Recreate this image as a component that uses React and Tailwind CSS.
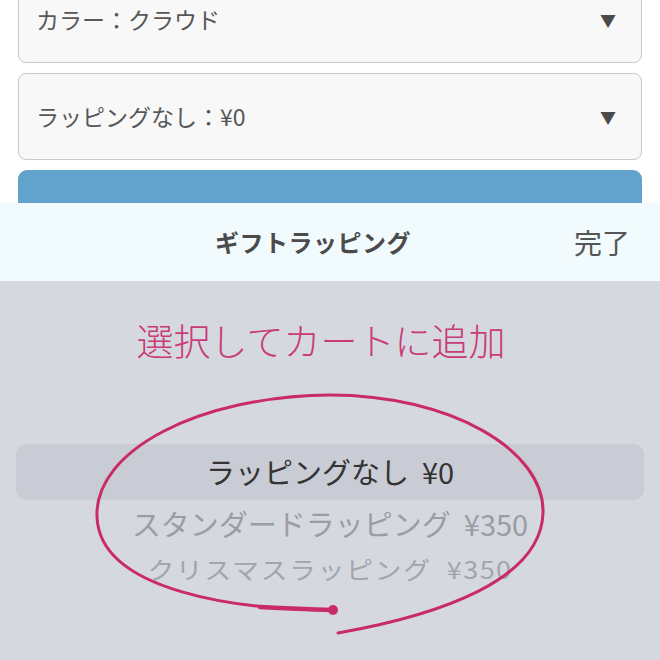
const font = { fontFamily: '"Noto Sans CJK JP", "Noto Sans", sans-serif' };

function SelectBox({ label, className = "" }) {
  return (
    <div
      className={`flex h-[87px] items-center justify-between rounded-[8px] border-[1.5px] border-[#c9c9c9] bg-[#f8f8f8] pl-[17px] pr-[25px] ${className}`}
    >
      <span className="text-[23px] text-[#575757]">{label}</span>
      <span className="text-[16px] leading-none text-[#4a4a4a]">▼</span>
    </div>
  );
}

function Circle() {
  return (
    <svg
      className="pointer-events-none absolute left-0 top-0"
      width="660"
      height="660"
      viewBox="0 0 660 660"
      fill="none"
    >
      <path
        d="M333 610 C 240 610, 100 592, 97 517 C 94 450, 200 396, 330 395 C 450 395, 545 450, 543 513 C 541 580, 440 615, 338 633"
        stroke="#c92b69"
        strokeWidth="3"
        strokeLinecap="round"
      />
      <path d="M260 607 Q 300 609, 333 610" stroke="#c92b69" strokeWidth="4.5" strokeLinecap="round" />
      <circle cx="333" cy="610" r="5" fill="#c92b69" />
    </svg>
  );
}

export default function App() {
  return (
    <div className="relative h-[660px] w-[660px] overflow-hidden bg-white" style={font}>
      <div className="flex h-[203px] flex-col gap-[10px] overflow-hidden px-[18px] pt-0">
        <SelectBox label="カラー：クラウド" className="-mt-[24px] shrink-0" />
        <SelectBox label="ラッピングなし：¥0" className="shrink-0" />
        <div className="h-[40px] shrink-0 rounded-t-[9px] bg-[#62a3cb]" />
      </div>

      <div className="relative flex h-[78px] items-center justify-center bg-[#f1fbfd] pr-[34px]">
        <span className="text-[24px] font-bold tracking-[0.5px] text-[#4b4b4b]">ギフトラッピング</span>
        <span className="absolute right-[30px] text-[28px] text-[#555]">完了</span>
      </div>

      <div className="flex h-[379px] flex-col bg-[#d6d8e0]">
        <div className="mt-[41px] pr-[18px] text-center text-[37px] font-light leading-none text-[#c83b76]">
          選択してカートに追加
        </div>
        <div className="mx-[16px] mt-[85px] flex h-[56px] items-center justify-center rounded-[10px] bg-[#c9ccd4]">
          <span className="text-[29px] text-[#333]">ラッピングなし&nbsp;&nbsp;¥0</span>
        </div>
        <div className="flex h-[47px] items-center justify-center">
          <span className="text-[29px] text-[#9b9da4]">スタンダードラッピング&nbsp;&nbsp;¥350</span>
        </div>
        <div className="flex h-[44px] items-center justify-center">
          <span className="inline-block scale-y-[0.88] text-[27px] tracking-[1.5px] text-[#a3a5ac]">
            クリスマスラッピング&nbsp;&nbsp;¥350
          </span>
        </div>
      </div>

      <Circle />
    </div>
  );
}
